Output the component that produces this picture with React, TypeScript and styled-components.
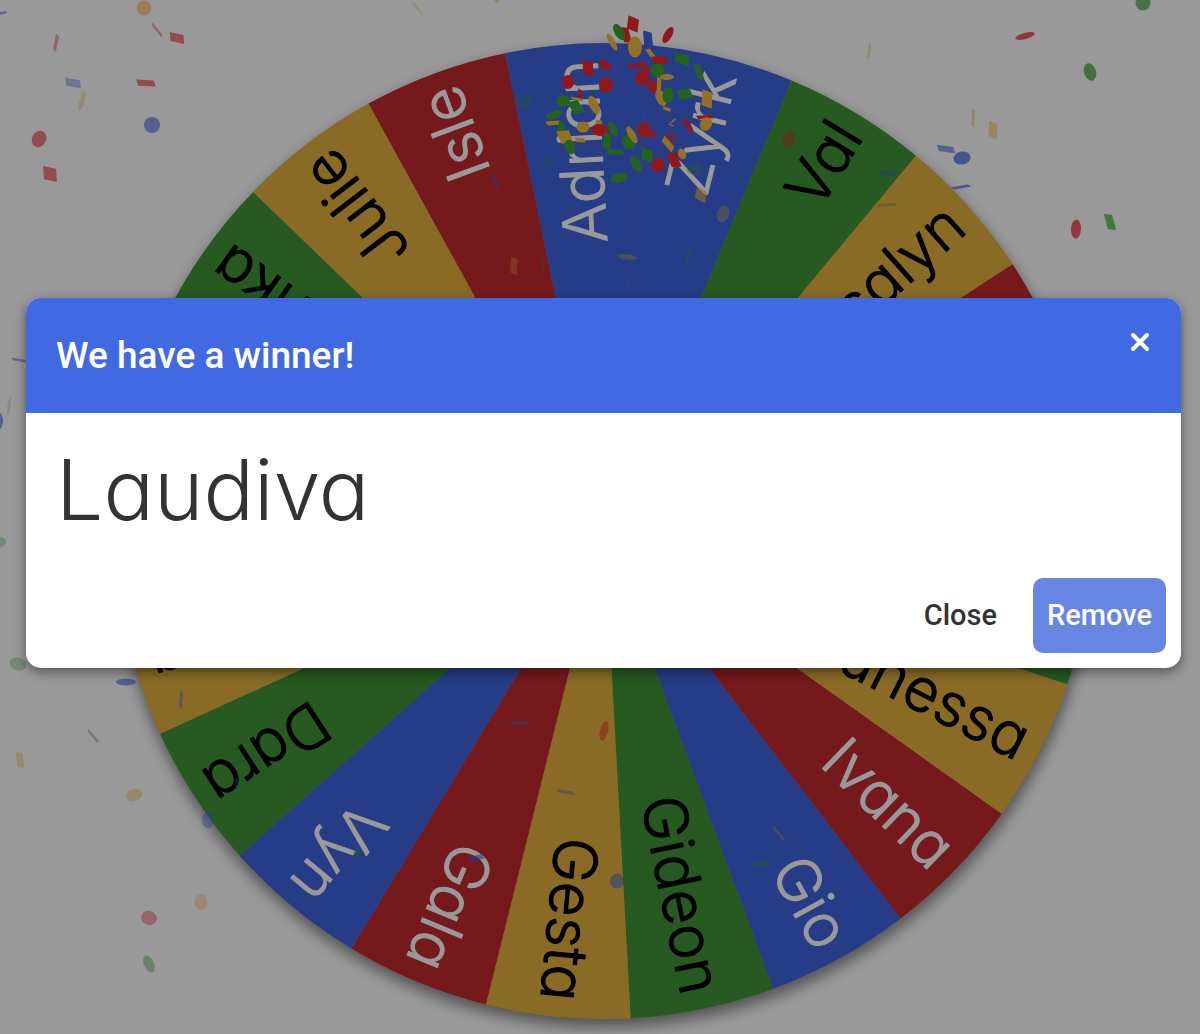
import React, { useState } from "react";
import styled, { createGlobalStyle } from "styled-components";

const GlobalStyle = createGlobalStyle`
  *, *::before, *::after { box-sizing: border-box; }
  body { margin: 0; background: #fff; font-family: Roboto, "Liberation Sans", sans-serif; }
`;

const RED = "#c32b2f";
const GOLD = "#e4b340";
const GREEN = "#409736";
const BLUE = "#4065e0";

const CX = 604;
const CY = 531;
const RADIUS = 488;
const START_ANGLE = 18.3;

type Slice = { name?: string; color: string };

const slices: Slice[] = [
  { name: "Vanessa", color: GOLD },
  { name: "Ivana", color: RED },
  { name: "Gio", color: BLUE },
  { name: "Gideon", color: GREEN },
  { name: "Gesta", color: GOLD },
  { name: "Gala", color: RED },
  { name: "Vyn", color: BLUE },
  { name: "Dara", color: GREEN },
  { name: "Eva", color: GOLD },
  { color: RED },
  { color: BLUE },
  { name: "Erika", color: GREEN },
  { name: "Julie", color: GOLD },
  { name: "Isle", color: RED },
  { name: "Adrian", color: BLUE },
  { name: "Zyrk", color: BLUE },
  { name: "Val", color: GREEN },
  { name: "Rosalyn", color: GOLD },
  { color: RED },
  { color: BLUE },
  { color: GREEN },
];

const STEP = 360 / slices.length;

const rim = (degrees: number) => {
  const a = (degrees * Math.PI) / 180;
  return `${(CX + RADIUS * Math.cos(a)).toFixed(2)} ${(CY + RADIUS * Math.sin(a)).toFixed(2)}`;
};

const confettiColors = { r: "#f0282f", y: "#f6bb3c", g: "#3da534", b: "#3f66e6" };

// kind (ellipse, quad), colour, centre x, centre y, width, height, rotation, opacity
type Piece = ["e" | "q", keyof typeof confettiColors, number, number, number, number, number, number];

const confetti: Piece[] = [
  ["e", "y", 144, 8, 15, 15, 0, 0.6],
  ["q", "r", 157, 30, 18, 3, 50, 0.4],
  ["q", "r", 177, 38, 16, 10, 8, 0.6],
  ["q", "r", 56, 43, 4, 18, 14, 0.4],
  ["q", "b", 73, 83, 17, 9, 6, 0.4],
  ["q", "r", 146, 83, 20, 7, 0, 0.6],
  ["e", "y", 82, 101, 5, 20, 14, 0.4],
  ["e", "b", 152, 125, 16, 16, 0, 0.6],
  ["e", "r", 39, 139, 14, 17, 25, 0.6],
  ["q", "r", 50, 174, 15, 15, 4, 0.6],
  ["e", "b", 2, 13, 10, 3, -10, 0.5],
  ["q", "b", 19, 360, 16, 3, 8, 0.5],
  ["e", "g", 9, 406, 3, 19, 8, 0.2],
  ["e", "b", -2, 421, 10, 18, 0, 0.6],
  ["e", "g", 0, 542, 12, 10, 0, 0.3],
  ["e", "g", 18, 664, 17, 13, 20, 0.3],
  ["e", "b", 126, 682, 20, 7, 0, 0.6],
  ["q", "b", 181, 700, 3, 19, 5, 0.5],
  ["q", "g", 93, 736, 18, 3, 48, 0.4],
  ["q", "y", 20, 760, 8, 17, -4, 0.4],
  ["e", "y", 134, 795, 17, 12, -15, 0.4],
  ["e", "b", 208, 820, 12, 16, 0, 0.4],
  ["e", "b", 237, 783, 7, 10, 0, 0.3],
  ["e", "y", 201, 902, 13, 16, 0, 0.35],
  ["e", "r", 149, 918, 16, 14, 20, 0.4],
  ["e", "g", 149, 964, 10, 18, -25, 0.4],
  ["q", "g", 357, 852, 8, 9, 35, 0.4],
  ["q", "y", 418, 9, 18, 2, 48, 0.35],
  ["e", "y", 497, 1, 5, 4, 0, 0.5],
  ["q", "b", 495, 182, 16, 5, 55, 0.35],
  ["q", "y", 514, 266, 8, 18, 6, 0.35],
  ["q", "g", 543, 266, 4, 16, 0, 0.2],
  ["e", "g", 525, 102, 12, 16, 20, 0.3],
  ["e", "g", 549, 162, 10, 15, 20, 0.2],
  ["e", "y", 627, 257, 20, 5, 6, 0.35],
  ["q", "g", 688, 258, 3, 17, 16, 0.35],
  ["e", "y", 723, 214, 12, 17, 20, 0.35],
  ["e", "r", 789, 139, 12, 17, 25, 0.45],
  ["q", "y", 869, 51, 3, 18, 10, 0.4],
  ["e", "r", 1025, 36, 20, 6, -15, 0.75],
  ["e", "g", 1143, 3, 15, 15, 0, 0.7],
  ["e", "g", 1090, 72, 12, 18, -18, 0.75],
  ["q", "y", 973, 118, 3, 19, 4, 0.5],
  ["q", "y", 993, 130, 10, 17, 10, 0.5],
  ["q", "b", 946, 149, 19, 7, 4, 0.6],
  ["e", "b", 962, 158, 17, 13, -8, 0.75],
  ["q", "b", 961, 187, 20, 3, -12, 0.7],
  ["e", "b", 889, 173, 19, 6, 2, 0.4],
  ["q", "g", 887, 205, 20, 3, -6, 0.4],
  ["e", "r", 1076, 229, 10, 19, 3, 0.75],
  ["q", "g", 1110, 222, 9, 18, -10, 0.7],
  ["q", "b", 519, 723, 18, 4, -8, 0.5],
  ["q", "g", 500, 724, 14, 1, 0, 0.3],
  ["e", "r", 604, 731, 8, 20, 14, 0.5],
  ["q", "b", 566, 792, 19, 4, 7, 0.4],
  ["e", "b", 617, 881, 14, 15, 0, 0.55],
  ["q", "y", 616, 858, 10, 2, -5, 0.3],
  ["q", "b", 476, 858, 17, 6, -18, 0.6],
  ["q", "y", 779, 834, 18, 3, 48, 0.3],
  ["e", "g", 761, 863, 18, 6, -6, 0.4],
  // fresh burst at the top of the wheel
  ["q", "r", 633, 24, 13, 15, 14, 1],
  ["q", "r", 626, 35, 9, 18, -12, 1],
  ["e", "g", 619, 32, 9, 18, -30, 1],
  ["e", "y", 612, 42, 6, 19, -30, 1],
  ["e", "y", 635, 47, 14, 21, 0, 1],
  ["q", "b", 648, 39, 10, 17, 0, 1],
  ["e", "r", 668, 35, 8, 18, 30, 1],
  ["q", "y", 651, 54, 5, 14, -35, 1],
  ["q", "r", 660, 60, 16, 9, -8, 1],
  ["e", "g", 657, 70, 15, 13, 0, 1],
  ["q", "g", 682, 59, 16, 11, 12, 1],
  ["q", "g", 699, 72, 7, 18, -14, 1],
  ["q", "r", 588, 68, 12, 16, 4, 1],
  ["e", "r", 605, 65, 14, 8, 35, 1],
  ["e", "r", 568, 82, 12, 14, 0, 1],
  ["e", "r", 606, 85, 14, 15, 0, 1],
  ["q", "r", 634, 66, 14, 5, -8, 1],
  ["q", "r", 645, 67, 15, 6, 48, 1],
  ["e", "r", 642, 78, 14, 15, 20, 1],
  ["q", "r", 652, 86, 10, 12, 15, 1],
  ["q", "y", 659, 86, 5, 19, 4, 1],
  ["e", "y", 667, 77, 14, 6, 0, 1],
  ["e", "y", 661, 98, 10, 17, -25, 1],
  ["e", "g", 668, 95, 11, 16, 10, 1],
  ["q", "g", 685, 94, 15, 12, -15, 1],
  ["q", "y", 707, 99, 12, 18, 8, 1],
  ["q", "r", 705, 117, 18, 4, -4, 1],
  ["e", "y", 706, 124, 12, 14, 30, 1],
  ["e", "r", 688, 125, 5, 18, -35, 1],
  ["e", "g", 563, 101, 14, 12, 0, 1],
  ["q", "g", 576, 107, 12, 16, -25, 1],
  ["q", "r", 580, 95, 4, 13, 0, 1],
  ["q", "y", 577, 99, 13, 3, 10, 1],
  ["e", "y", 594, 105, 9, 20, -25, 1],
  ["e", "g", 554, 115, 16, 8, -18, 1],
  ["q", "y", 554, 123, 17, 5, -6, 1],
  ["q", "g", 561, 128, 8, 13, 20, 1],
  ["q", "y", 565, 137, 14, 15, -15, 1],
  ["e", "g", 570, 147, 10, 15, -20, 1],
  ["e", "y", 583, 127, 13, 11, 0, 1],
  ["q", "y", 580, 140, 11, 5, 0, 1],
  ["q", "y", 599, 122, 7, 5, 0, 1],
  ["e", "r", 600, 130, 18, 12, 4, 1],
  ["q", "g", 607, 141, 9, 17, 10, 1],
  ["e", "g", 613, 129, 7, 17, -28, 1],
  ["q", "g", 615, 152, 18, 6, 0, 1],
  ["e", "g", 629, 142, 14, 15, 0, 1],
  ["e", "y", 632, 135, 7, 19, -30, 1],
  ["e", "r", 644, 130, 13, 15, 0, 1],
  ["q", "r", 652, 134, 8, 7, 15, 1],
  ["e", "g", 636, 164, 9, 18, -30, 1],
  ["q", "g", 647, 155, 13, 13, 15, 1],
  ["e", "g", 619, 178, 17, 10, -15, 1],
  ["e", "r", 658, 165, 14, 14, 0, 1],
  ["q", "r", 674, 160, 11, 17, -15, 1],
  ["e", "r", 670, 138, 13, 11, 0, 0.55],
  ["q", "y", 668, 144, 17, 7, 45, 1],
  ["e", "y", 682, 154, 8, 11, -20, 1],
  ["q", "y", 667, 109, 9, 4, 15, 1],
  ["q", "y", 673, 121, 8, 2, -45, 0.8],
  ["q", "y", 671, 125, 6, 2, 20, 0.8],
  ["e", "g", 694, 169, 16, 12, 10, 0.3],
  ["q", "y", 701, 195, 13, 13, 20, 0.6],
];

const Page = styled.main`
  position: relative;
  min-height: 100vh;
  display: flex;
  overflow: hidden;
`;

const WheelArt = styled.svg`
  position: absolute;
  inset: 0;
  width: 100%;
  height: 100%;
`;

const SliceLabel = styled.text<{ $dark: boolean }>`
  font-family: Inter, Lato, sans-serif;
  font-size: 60px;
  font-weight: 300;
  font-feature-settings: "cv11";
  fill: ${(p) => (p.$dark ? "#000" : "#fff")};
  stroke: ${(p) => (p.$dark ? "#000" : "#fff")};
  stroke-width: 1px;
  stroke-linejoin: round;
`;

const Backdrop = styled.div`
  position: relative;
  flex: 1;
  display: flex;
  align-items: center;
  padding: 0 19px 68px 26px;
  background: rgba(0, 0, 0, 0.4);
`;

const Dialog = styled.section`
  flex: 1;
  min-width: 0;
  overflow: hidden;
  border-radius: 15px;
  background: #fff;
  color: #333;
  box-shadow: 0 4px 12px rgba(0, 0, 0, 0.45);
`;

const DialogHeader = styled.header`
  display: flex;
  align-items: flex-start;
  justify-content: space-between;
  padding: 29px 30px;
  background: #4169e1;
  color: #fff;
`;

const Title = styled.h1`
  margin: 0;
  font-size: 37px;
  font-weight: 500;
  line-height: 57px;
`;

const IconButton = styled.button`
  display: flex;
  padding: 5px 0;
  border: 0;
  background: none;
  color: inherit;
  cursor: pointer;
`;

const Winner = styled.p`
  margin: 0;
  padding: 27px 30px 23px;
  font-family: Inter, Lato, sans-serif;
  font-size: 84px;
  font-weight: 300;
  line-height: 100px;
  font-feature-settings: "cv11";
`;

const Actions = styled.footer`
  display: flex;
  justify-content: flex-end;
  gap: 22px;
  padding: 15px;
`;

const ActionButton = styled.button<{ $filled?: boolean }>`
  padding: 0 14px;
  border: 0;
  border-radius: 10px;
  background: ${(p) => (p.$filled ? "#6785e3" : "transparent")};
  color: ${(p) => (p.$filled ? "#fff" : "#333")};
  font: 500 29px/75px Roboto, "Liberation Sans", sans-serif;
  cursor: pointer;
`;

function Confetti() {
  return (
    <g>
      {confetti.map(([kind, color, x, y, w, h, angle, opacity], i) => (
        <g key={i} transform={`translate(${x} ${y}) rotate(${angle})`} fill={confettiColors[color]} opacity={opacity}>
          {kind === "e" ? (
            <ellipse rx={w / 2} ry={h / 2} />
          ) : (
            <polygon
              points={`${-w / 2},${-h / 2} ${w / 2 - w / 8},${-h / 2 + h / 8} ${w / 2},${h / 2} ${-w / 2 + w / 8},${h / 2 - h / 8}`}
            />
          )}
        </g>
      ))}
    </g>
  );
}

function Wheel({ entries }: { entries: Slice[] }) {
  return (
    <WheelArt viewBox="0 0 1200 1034" preserveAspectRatio="xMidYMid slice" role="img" aria-label="Name wheel">
      <defs>
        <filter id="wheel-shadow" x="-10%" y="-10%" width="120%" height="120%">
          <feGaussianBlur stdDeviation="7" />
        </filter>
      </defs>
      <circle cx={CX + 1} cy={CY + 7} r={RADIUS + 1} fill="#000" opacity="0.45" filter="url(#wheel-shadow)" />
      {entries.map((slice, i) => {
        const from = START_ANGLE + i * STEP;
        return (
          <path
            key={i}
            d={`M${CX} ${CY}L${rim(from)}A${RADIUS} ${RADIUS} 0 0 1 ${rim(from + STEP)}Z`}
            fill={slice.color}
          />
        );
      })}
      {entries.map((slice, i) =>
        slice.name ? (
          <SliceLabel
            key={i}
            $dark={slice.color === GOLD || slice.color === GREEN}
            x={RADIUS - 16}
            y={19}
            textAnchor="end"
            transform={`translate(${CX} ${CY}) rotate(${START_ANGLE + (i + 0.5) * STEP})`}
          >
            {slice.name}
          </SliceLabel>
        ) : null
      )}
      <Confetti />
    </WheelArt>
  );
}

export default function App() {
  const [entries, setEntries] = useState(slices);
  const [open, setOpen] = useState(true);
  const winner = "Laudiva";

  const close = () => setOpen(false);
  const remove = () => {
    setEntries((list) => list.filter((entry) => entry.name !== winner));
    close();
  };

  return (
    <Page>
      <GlobalStyle />
      <Wheel entries={entries} />
      {open && (
        <Backdrop>
          <Dialog role="dialog" aria-modal="true" aria-labelledby="winner-title">
            <DialogHeader>
              <Title id="winner-title">We have a winner!</Title>
              <IconButton type="button" aria-label="Dismiss" onClick={close}>
                <svg width="22" height="20" viewBox="0 0 22 20" fill="none" stroke="currentColor" strokeWidth="4" strokeLinecap="round">
                  <path d="M4 3L18 17M18 3L4 17" />
                </svg>
              </IconButton>
            </DialogHeader>
            <Winner>{winner}</Winner>
            <Actions>
              <ActionButton type="button" onClick={close}>
                Close
              </ActionButton>
              <ActionButton type="button" $filled onClick={remove}>
                Remove
              </ActionButton>
            </Actions>
          </Dialog>
        </Backdrop>
      )}
    </Page>
  );
}
